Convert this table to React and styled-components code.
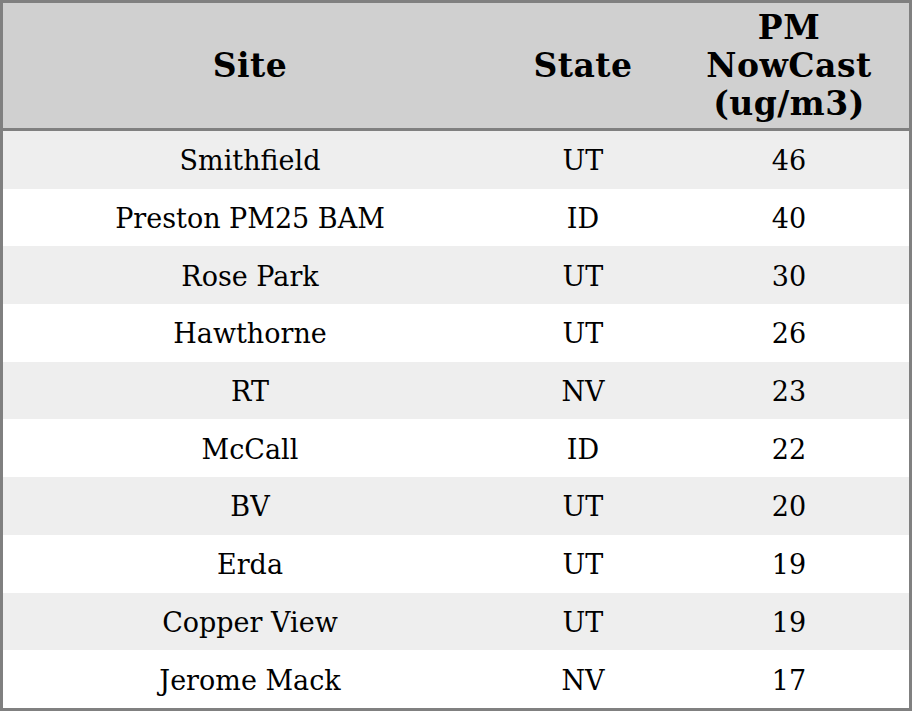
import React from 'react'
import styled, { createGlobalStyle } from 'styled-components'

const rows = [
  { site: 'Smithfield', state: 'UT', value: 46 },
  { site: 'Preston PM25 BAM', state: 'ID', value: 40 },
  { site: 'Rose Park', state: 'UT', value: 30 },
  { site: 'Hawthorne', state: 'UT', value: 26 },
  { site: 'RT', state: 'NV', value: 23 },
  { site: 'McCall', state: 'ID', value: 22 },
  { site: 'BV', state: 'UT', value: 20 },
  { site: 'Erda', state: 'UT', value: 19 },
  { site: 'Copper View', state: 'UT', value: 19 },
  { site: 'Jerome Mack', state: 'NV', value: 17 }
]

const GlobalStyle = createGlobalStyle`
  html, body {
    margin: 0;
    padding: 0;
    background: #fff;
    overflow: hidden;
  }
  body {
    font-family: 'DejaVu Serif', serif;
  }
`

const App = () => {
  return (
    <>
      <GlobalStyle />
      <Table>
        <colgroup>
          <col style={{ width: 494 }} />
          <col style={{ width: 172 }} />
          <col style={{ width: 240 }} />
        </colgroup>
        <thead>
          <tr>
            <Th>Site</Th>
            <Th>State</Th>
            <Th>PM<br />NowCast<br />(ug/m3)</Th>
          </tr>
        </thead>
        <tbody>
          {rows.map((row, i) => (
            <Row key={row.site} $striped={i % 2 === 0}>
              <Td>{row.site}</Td>
              <Td>{row.state}</Td>
              <Td>{row.value}</Td>
            </Row>
          ))}
        </tbody>
      </Table>
    </>
  )
}

export default App

const Table = styled.table`
  width: 912px;
  border-collapse: separate;
  border-spacing: 0;
  border: 3px solid #808080;
  table-layout: fixed;
  box-sizing: border-box;
`

const Th = styled.th`
  box-sizing: border-box;
  height: 128px;
  padding: 0;
  background: #d0d0d0;
  border-bottom: 3px solid #808080;
  color: #000;
  font-size: 33px;
  font-weight: 700;
  letter-spacing: 0.5px;
  line-height: 38px;
  text-align: center;
  vertical-align: middle;
`

const Row = styled.tr`
  background: ${props => (props.$striped ? '#eeeeee' : '#ffffff')};
`

const Td = styled.td`
  box-sizing: border-box;
  height: 57.7px;
  padding: 2px 0 0;
  color: #000;
  font-size: 27px;
  text-align: center;
  vertical-align: middle;
`
